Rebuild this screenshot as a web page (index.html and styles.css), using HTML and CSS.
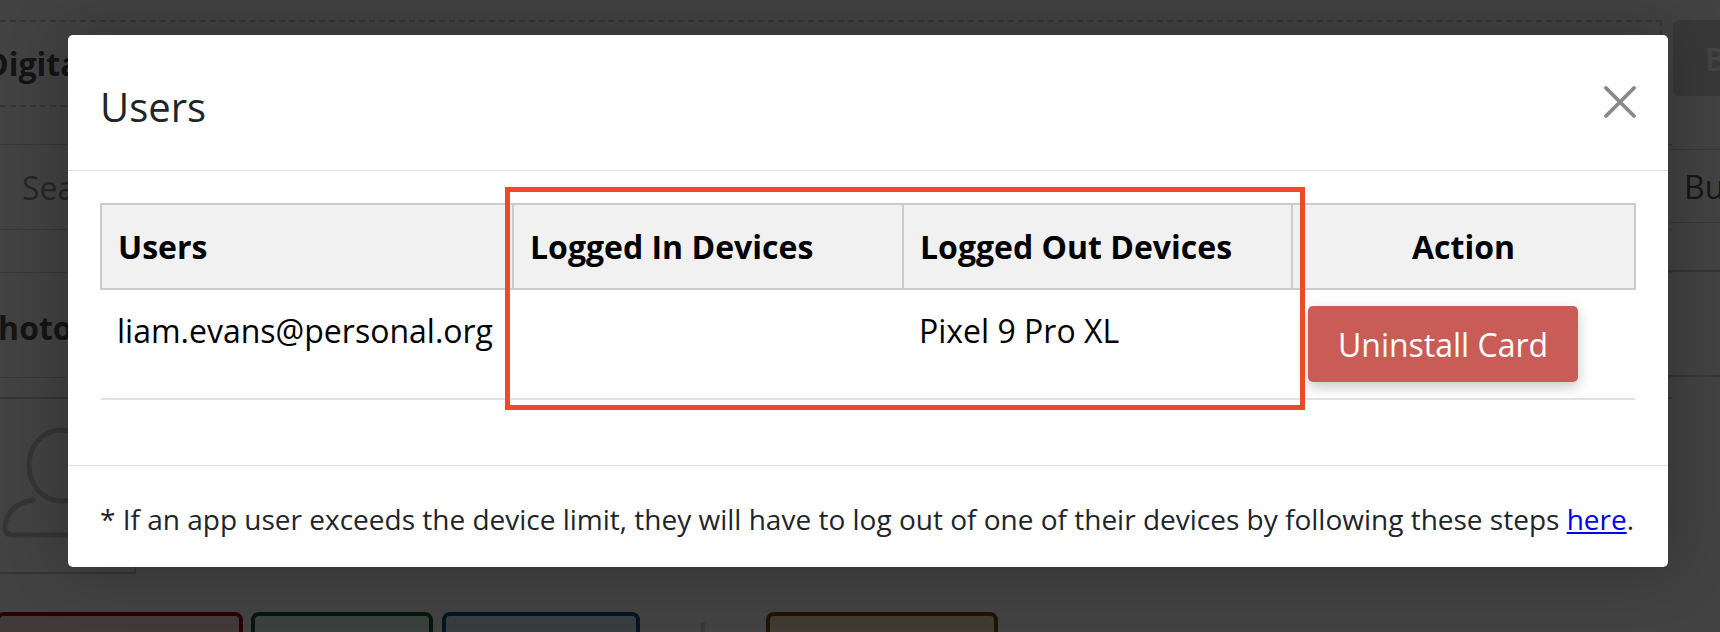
FILE: index.html
```html
<!DOCTYPE html>
<html lang="en">
<head>
<meta charset="utf-8">
<title>Users</title>
<link rel="stylesheet" href="styles.css">
</head>
<body>
<div class="backdrop">
  <div class="page-main">
    <div class="dashed-box"><span class="digital">Digital Cards</span></div>
    <div class="search-row"><span class="search">Search</span></div>
    <div class="spacer-row"></div>
    <div class="photo-row"><span class="photo">Photo</span></div>
    <div class="thin-row"></div>
    <div class="avatar-row">
      <div class="avatar-box">
        <svg class="avatar" viewBox="0 0 122 114" aria-hidden="true">
          <path d="M33 73C14 76 5 88 5 101c0 5 3 7 9 7h94c6 0 9-2 9-7 0-13-9-25-28-28" />
          <ellipse cx="61" cy="38.5" rx="32" ry="35.5" />
        </svg>
      </div>
    </div>
    <div class="action-row">
      <div class="act act-red"></div>
      <div class="act act-green"></div>
      <div class="act act-blue"></div>
      <div class="tick"></div>
      <div class="act act-yellow"></div>
    </div>
  </div>
  <div class="page-side">
    <div class="side-btn">B</div>
    <div class="side-row"><span class="side-text">Bulk</span></div>
    <div class="side-gap"></div>
    <div class="side-band"></div>
  </div>
</div>

<div class="modal">
  <div class="modal-header">
    <h2 class="modal-title">Users</h2>
    <svg class="close" viewBox="0 0 32 32" aria-label="Close">
      <path d="M2 2 30 30M30 2 2 30" />
    </svg>
  </div>
  <div class="modal-body">
    <table class="users">
      <thead>
        <tr>
          <th class="col-user">Users</th>
          <th class="col-in">Logged In Devices</th>
          <th class="col-out">Logged Out Devices</th>
          <th class="col-action">Action</th>
        </tr>
      </thead>
      <tbody>
        <tr>
          <td>liam.evans@personal.org</td>
          <td></td>
          <td>Pixel 9 Pro XL</td>
          <td class="cell-action"><button class="uninstall">Uninstall Card</button></td>
        </tr>
      </tbody>
    </table>
  </div>
  <div class="modal-footer">
    <p class="note">* If an app user exceeds the device limit, they will have to log out of one of their devices by following these steps <a href="#">here</a>.</p>
  </div>
  <div class="highlight"></div>
</div>
</body>
</html>
```

FILE: styles.css
```css
* { box-sizing: border-box; }
html, body { margin: 0; padding: 0; }
body {
  width: 1720px;
  height: 632px;
  overflow: hidden;
  background: #424242;
  font-family: "Open Sans", "Noto Sans", sans-serif;
}

/* Dimmed page behind the dialog */
.backdrop {
  display: flex;
  width: 1720px;
  height: 632px;
  overflow: hidden;
  color: #1c1c1c;
}
.page-main { width: 1672px; flex: none; padding-top: 20px; }
.dashed-box {
  width: 1662px;
  height: 87px;
  border: 2px dashed #363636;
  border-left: 0;
  display: flex;
  align-items: center;
  overflow: hidden;
}
.digital { font-size: 32px; font-weight: 700; margin-left: -15px; white-space: nowrap; color: #141414; }
.search-row {
  height: 86px;
  margin-top: 37px;
  border-top: 1.5px solid #383838;
  border-bottom: 1.5px solid #383838;
  display: flex;
  align-items: center;
  padding-left: 22px;
}
.search { font-size: 32px; color: #262626; }
.spacer-row { height: 43px; border-bottom: 1.5px solid #383838; }
.photo-row {
  height: 105px;
  border-bottom: 1.5px solid #383838;
  display: flex;
  align-items: center;
  padding-top: 4px;
}
.photo { font-size: 32px; font-weight: 700; margin-left: -22px; color: #141414; }
.thin-row { height: 21px; border-bottom: 2px solid #343434; }
.avatar-row { height: 175px; }
.avatar-box {
  width: 136px;
  height: 175px;
  border-right: 2px solid #353535;
  border-bottom: 2px solid #353535;
  padding-top: 28px;
}
.avatar { display: block; width: 122px; height: 114px; fill: none; stroke: #353535; stroke-width: 5; stroke-linecap: round; }
.action-row { display: flex; align-items: flex-start; margin-top: 38px; }
.act { height: 60px; border: 4px solid; border-radius: 8px; flex: none; }
.act-red { width: 247px; margin-left: -4px; margin-right: 8px; background: #423a3a; border-color: #2b0204; }
.act-green { width: 182px; margin-right: 9px; background: #3a403d; border-color: #07170f; }
.act-blue { width: 198px; background: #383d40; border-color: #04161f; }
.tick { width: 4px; height: 40px; margin: 10px 0 0 61px; background: #383838; flex: none; }
.act-yellow { width: 232px; margin-left: 61px; background: #403a33; border-color: #201505; }

.page-side { width: 48px; flex: none; padding-top: 20px; }
.side-btn {
  width: 60px;
  height: 76px;
  margin-left: 1px;
  padding-left: 32px;
  border-radius: 6px;
  background: #383838;
  color: #444;
  font-size: 32px;
  font-weight: 600;
  display: flex;
  align-items: center;
  white-space: nowrap;
}
.side-row {
  height: 74px;
  margin-top: 53px;
  margin-left: -20px;
  border-top: 1.5px solid #393939;
  border-bottom: 1.5px solid #393939;
  display: flex;
  align-items: center;
  padding-left: 32px;
}
.side-text { font-size: 32px; color: #161616; }
.side-gap { height: 49px; margin-left: -20px; border-bottom: 2px solid #353535; }
.side-band { height: 105px; margin-left: -20px; border-bottom: 2px solid #363636; }

/* Dialog */
.modal {
  position: absolute;
  left: 68px;
  top: 35px;
  width: 1600px;
  height: 532px;
  display: flex;
  flex-direction: column;
  background: #fff;
  border-radius: 5px;
  box-shadow: 0 0 60px rgba(0, 0, 0, .28);
  color: #212529;
}
.modal-header {
  height: 136px;
  flex: none;
  display: flex;
  align-items: flex-start;
  justify-content: space-between;
  padding: 0 32px;
  border-bottom: 1.5px solid #dee2e6;
}
.modal-title { margin: 45px 0 0; font-size: 40px; font-weight: 400; line-height: 54px; }
.close { width: 32px; height: 32px; margin-top: 51px; fill: none; stroke: #888; stroke-width: 3.8; stroke-linecap: round; }

.modal-body { flex: 1; padding: 32px 32px 0 32px; }
.users { width: 1536px; table-layout: fixed; border-collapse: collapse; color: #000; }
.users th {
  height: 85px;
  padding: 0 16px;
  background: #f1f1f1;
  border: 2px solid #ccc;
  font-size: 32px;
  font-weight: 700;
  text-align: left;
}
.col-user { width: 412px; }
.col-in { width: 390px; }
.col-out { width: 389px; }
.users th.col-action { text-align: center; }
.users td {
  height: 110px;
  padding: 20px 16px 0;
  vertical-align: top;
  font-size: 32px;
  line-height: 42px;
  border-bottom: 2px solid #dee2e6;
}
.users td.cell-action { padding-top: 16px; }
.uninstall {
  display: block;
  width: 270px;
  height: 76px;
  border: 0;
  border-radius: 5px;
  background: #c95c56;
  color: #fff;
  font: 400 32px "Open Sans", sans-serif;
  box-shadow: 0 5px 14px rgba(0, 0, 0, .22);
}

.modal-footer {
  height: 102px;
  flex: none;
  border-top: 1.5px solid #dee2e6;
  padding: 34px 32px 0;
}
.note { margin: 0; font-size: 28px; line-height: 38px; white-space: nowrap; }
.note a { color: #0000ee; }

/* Annotation drawn over the table */
.highlight {
  position: absolute;
  left: 437px;
  top: 152px;
  width: 800px;
  height: 223px;
  border: 5px solid #ee4a2a;
}
```
